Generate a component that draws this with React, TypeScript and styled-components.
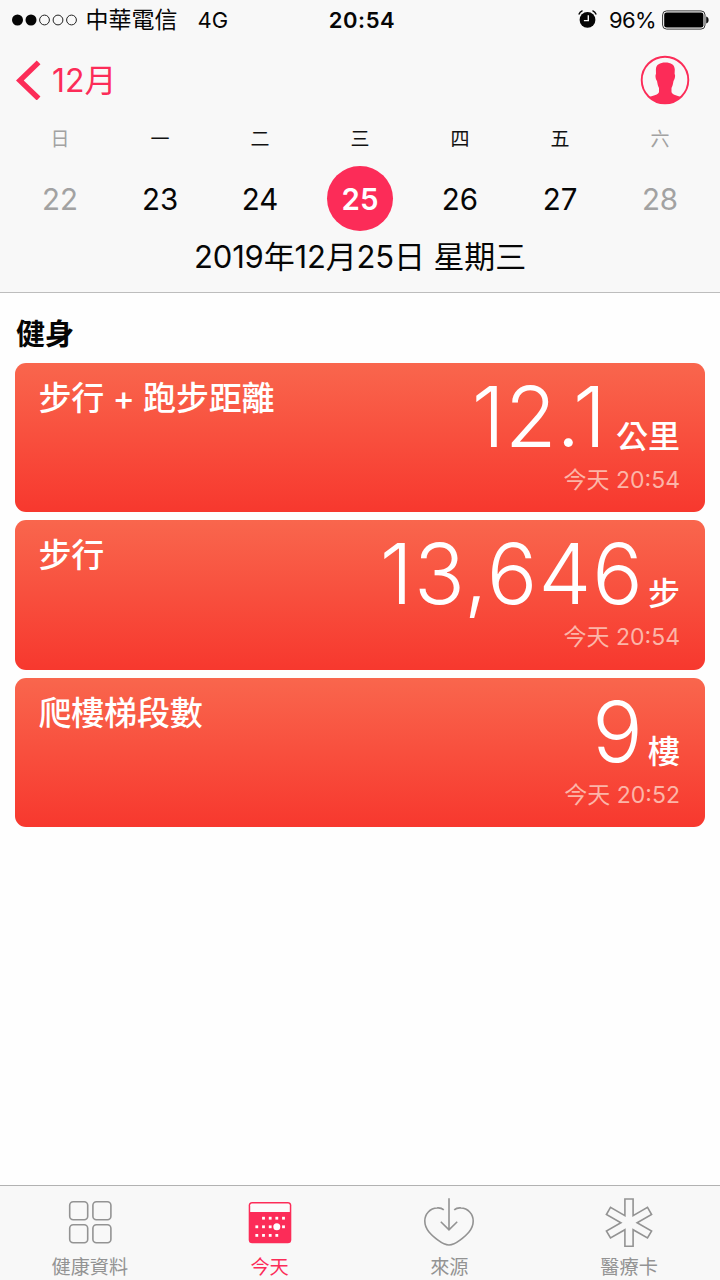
import React from "react";
import styled, { createGlobalStyle } from "styled-components";

const PINK = "#fc2c58";
const GREY = "#939393";

const GlobalStyle = createGlobalStyle`
  * { box-sizing: border-box; }
  body {
    margin: 0;
    background: #fefefe;
    color: #060606;
    font-family: Inter, "Noto Sans CJK TC", "Liberation Sans", sans-serif;
  }
`;

const Screen = styled.div`
  width: 720px;
  height: 1280px;
  display: flex;
  flex-direction: column;
  overflow: hidden;
  white-space: nowrap;
`;

const Header = styled.header`
  height: 293px;
  flex: none;
  background: #f8f8f8;
  border-bottom: 1px solid #bdbdbd;
`;

const StatusBar = styled.div`
  display: grid;
  grid-template-columns: 1fr auto 1fr;
  height: 40px;
  padding: 0 11px 0 12px;
  line-height: 40px;
  font-size: 22px;
`;

const StatusGroup = styled.div<{ $end?: boolean }>`
  display: flex;
  align-items: center;
  justify-content: ${(p) => (p.$end ? "flex-end" : "flex-start")};
`;

const Carrier = styled.span`
  margin: 0 20px 0 7.5px;
  font-size: 23px;
`;

const Network = styled.span`
  font-size: 22px;
`;

const Clock = styled.span`
  margin-left: 3px;
  font-weight: 600;
  letter-spacing: 0.6px;
`;

const BatteryLevel = styled.span`
  margin: 0 6px 0 12px;
  letter-spacing: -0.6px;
`;

const NavBar = styled.nav`
  display: flex;
  align-items: center;
  justify-content: space-between;
  height: 80px;
  padding: 0 30px 0 16px;
`;

const BackLink = styled.a`
  display: flex;
  align-items: center;
  gap: 11px;
  color: ${PINK};
  font-size: 32px;
  line-height: 42px;
`;

const BackLabel = styled.span`
  padding-top: 2px;
`;

const WeekRow = styled.div<{ $height: number }>`
  display: grid;
  grid-template-columns: repeat(7, 100px);
  justify-content: center;
  align-items: center;
  justify-items: center;
  height: ${(p) => p.$height}px;
`;

const Weekday = styled.span<{ $muted: boolean }>`
  color: ${(p) => (p.$muted ? "#a2a2a2" : "#111")};
  font-size: 19px;
  line-height: 39px;
`;

const Day = styled.span<{ $muted: boolean; $selected: boolean }>`
  width: 66px;
  height: 65px;
  border-radius: 50%;
  text-align: center;
  font-size: 29.5px;
  line-height: 66px;
  font-weight: ${(p) => (p.$selected ? 600 : 400)};
  color: ${(p) => (p.$selected ? "#fff" : p.$muted ? "#a2a2a2" : "#060606")};
  background: ${(p) => (p.$selected ? PINK : "transparent")};
`;

const FullDate = styled.div`
  text-align: center;
  font-size: 31px;
  letter-spacing: -0.15px;
  line-height: 34px;
`;

const Content = styled.main`
  flex: 1;
  padding: 17px 15.5px 0 15px;
`;

const SectionTitle = styled.h2`
  margin: 0 0 4px 1px;
  font-size: 29px;
  font-weight: 700;
  line-height: 49px;
`;

const CardList = styled.div`
  display: grid;
  gap: 8px;
`;

const Card = styled.section`
  display: flex;
  justify-content: space-between;
  height: 149.4px;
  padding: 5px 24.5px 0 23.5px;
  border-radius: 11px;
  color: #fff;
  background: linear-gradient(#f9664d, #f7382e);
`;

const CardTitle = styled.h3`
  margin: 0;
  font-size: 33px;
  font-weight: 500;
  letter-spacing: -0.2px;
  line-height: 61px;
`;

const Reading = styled.div`
  display: flex;
  flex-direction: column;
  align-items: flex-end;
`;

const Amount = styled.div`
  display: flex;
  align-items: flex-end;
  height: 97px;
`;

const Value = styled.span<{ $decimal: boolean }>`
  margin-right: ${(p) => (p.$decimal ? 10 : 4)}px;
  font-size: 84px;
  font-weight: 300;
  letter-spacing: ${(p) => (p.$decimal ? 0 : 1.1)}px;
  line-height: 97px;
`;

const Unit = styled.span`
  margin-bottom: 8px;
  font-size: 32px;
  font-weight: 500;
  line-height: 40px;
`;

const Stamp = styled.span`
  color: #fcb5a8;
  font-size: 23px;
  line-height: 30px;
`;

const TabBar = styled.nav`
  display: grid;
  grid-template-columns: repeat(4, 1fr);
  height: 95px;
  flex: none;
  padding-right: 1px;
  background: #f8f8f8;
  border-top: 1px solid #b2b2b2;
`;

const Tab = styled.a<{ $active: boolean }>`
  display: flex;
  flex-direction: column;
  align-items: center;
  padding-top: 11px;
  color: ${(p) => (p.$active ? PINK : GREY)};
  font-size: 19.2px;
  line-height: 34px;

  svg {
    margin-bottom: 3px;
  }
`;

const SignalDots = () => (
  <svg width="66" height="14" viewBox="0 0 66 14">
    {[0, 1, 2, 3, 4].map((i) => (
      <circle
        key={i}
        cx={5.5 + i * 13.5}
        cy="7"
        r={i < 2 ? 5.5 : 4.9}
        fill={i < 2 ? "#060606" : "none"}
        stroke={i < 2 ? "none" : "#222"}
        strokeWidth="1"
      />
    ))}
  </svg>
);

const AlarmIcon = () => (
  <svg width="20" height="20" viewBox="0 0 20 20" fill="none">
    <circle cx="10.5" cy="9.9" r="7.9" fill="#060606" />
    <path d="M1.8 4.600C2.500 2.600 3.700 1.500 5.500.7M19.200 4.600C18.500 2.600 17.300 1.500 15.500.7" stroke="#060606" strokeWidth="1.4" />
    <path d="M11.300 5.200v5.400H6.900" stroke="#f8f8f8" strokeWidth="1.4" />
  </svg>
);

const BatteryIcon = () => (
  <svg width="47" height="20" viewBox="0 0 47 20">
    <rect x="0.6" y="0.9" width="42.4" height="18.2" rx="4" fill="none" stroke="#333" strokeWidth="1" />
    <rect x="2.2" y="2.4" width="39.2" height="15.2" rx="2.4" fill="#000" />
    <path d="M44.2 6.6c3.2.6 3.2 6.2 0 6.8z" fill="#111" />
  </svg>
);

const BackIcon = () => (
  <svg width="25" height="40" viewBox="0 0 25 40" fill="none" stroke={PINK} strokeWidth="5.4">
    <path d="M22.6 2.4 3.8 20.5l18.8 18" />
  </svg>
);

const ProfileIcon = () => (
  <svg width="50" height="50" viewBox="0 0 50 50">
    <circle cx="25" cy="25" r="23.3" fill="none" stroke={PINK} strokeWidth="1.9" />
    <path
      d="M25.3 7.5C31 7.5 34.500 9.500 34.800 14.500L34.600 19C35.600 20 35 24 33.500 26C33 29 32.500 31 31.500 33V37C32.200 40 37 40.500 41 42A23.500 23.500 0 0 1 9 42C13.500 40.500 18.300 40 19 37V33C18 31 17.500 29 17 26C15.500 24 15 20 16 19L15.900 14.500C16 9.500 20 7.500 25.300 7.500z"
      fill={PINK}
    />
  </svg>
);

const TilesIcon = () => (
  <svg width="50" height="50" viewBox="0 0 50 50" fill="none" stroke={GREY} strokeWidth="1.6">
    <rect x="4.7" y="4.7" width="18" height="18" rx="3.5" />
    <rect x="27.9" y="4.7" width="18" height="18" rx="3.5" />
    <rect x="4.7" y="27.7" width="18" height="18" rx="3.5" />
    <rect x="27.9" y="27.7" width="18" height="18" rx="3.5" />
  </svg>
);

const CalendarIcon = () => (
  <svg width="50" height="50" viewBox="0 0 50 50">
    <rect x="3.7" y="5" width="42.6" height="41.3" rx="3.5" fill={PINK} />
    <path d="M5.2 15V8.2q0-1.7 1.7-1.7h36.2q1.7 0 1.7 1.7V15z" fill="#fbfbfb" />
    <g fill="#fff">
      {[18.5, 25.2, 31.8, 38.5].map((x) => (
        <rect key={x} x={x - 1.4} y="19.8" width="2.8" height="2.8" />
      ))}
      {[11.8, 18.5, 25.2, 38.5].map((x) => (
        <rect key={x} x={x - 1.4} y="28.4" width="2.8" height="2.8" />
      ))}
      {[11.8, 18.5, 25.2, 31.8].map((x) => (
        <rect key={x} x={x - 1.4} y="37" width="2.8" height="2.8" />
      ))}
      <circle cx="31.8" cy="29.8" r="3.5" />
    </g>
  </svg>
);

const HeartIcon = () => (
  <svg width="52" height="50" viewBox="0 0 52 50" fill="none" stroke={GREY} strokeWidth="1.6">
    <path d="M20.8 12.9C18.7 11 16.5 10.7 14.2 10.9 7 11.3 1.8 17 1.8 24c0 8.6 6.8 14.3 13.2 19.2 3.3 2.5 7 4.8 11 4.8s7.7-2.3 11-4.8C43.4 38.3 50.2 32.6 50.2 24c0-7-5.2-12.7-12.4-13.1-2.3-.2-4.5.1-6.6 2" />
    <path d="M26 1.3v31.4M17.8 24.8l8.2 8 8.2-8" />
  </svg>
);

const StarIcon = () => (
  <svg width="50" height="50" viewBox="0 0 50 50" fill="none" stroke={GREY} strokeWidth="1.6">
    <path d="M20.9 2h8.2v16.7l14.4-8.3 4.1 7.1-14.5 8.2 14.5 8.3-4.1 7-14.4-8.3V49.3h-8.2V32.7L6.5 41l-4.1-7 14.5-8.3-14.5-8.2 4.1-7.1 14.4 8.3z" />
  </svg>
);

const week = [
  { name: "日", day: 22 },
  { name: "一", day: 23 },
  { name: "二", day: 24 },
  { name: "三", day: 25 },
  { name: "四", day: 26 },
  { name: "五", day: 27 },
  { name: "六", day: 28 },
];

const isWeekend = (i: number) => i === 0 || i === 6;

const readings = [
  { title: "步行 + 跑步距離", value: "12.1", unit: "公里", stamp: "今天 20:54" },
  { title: "步行", value: "13,646", unit: "步", stamp: "今天 20:54" },
  { title: "爬樓梯段數", value: "9", unit: "樓", stamp: "今天 20:52" },
];

const tabs = [
  { label: "健康資料", Icon: TilesIcon },
  { label: "今天", Icon: CalendarIcon },
  { label: "來源", Icon: HeartIcon },
  { label: "醫療卡", Icon: StarIcon },
];

export default function App() {
  return (
    <Screen>
      <GlobalStyle />
      <Header>
        <StatusBar>
          <StatusGroup>
            <SignalDots />
            <Carrier>中華電信</Carrier>
            <Network>4G</Network>
          </StatusGroup>
          <Clock>20:54</Clock>
          <StatusGroup $end>
            <AlarmIcon />
            <BatteryLevel>96%</BatteryLevel>
            <BatteryIcon />
          </StatusGroup>
        </StatusBar>
        <NavBar>
          <BackLink>
            <BackIcon />
            <BackLabel>12月</BackLabel>
          </BackLink>
          <ProfileIcon />
        </NavBar>
        <WeekRow $height={37}>
          {week.map((d, i) => (
            <Weekday key={d.name} $muted={isWeekend(i)}>
              {d.name}
            </Weekday>
          ))}
        </WeekRow>
        <WeekRow $height={83}>
          {week.map((d, i) => (
            <Day key={d.day} $muted={isWeekend(i)} $selected={d.day === 25}>
              {d.day}
            </Day>
          ))}
        </WeekRow>
        <FullDate>2019年12月25日 星期三</FullDate>
      </Header>
      <Content>
        <SectionTitle>健身</SectionTitle>
        <CardList>
          {readings.map((r) => (
            <Card key={r.title}>
              <CardTitle>{r.title}</CardTitle>
              <Reading>
                <Amount>
                  <Value $decimal={r.value.includes(".")}>{r.value}</Value>
                  <Unit>{r.unit}</Unit>
                </Amount>
                <Stamp>{r.stamp}</Stamp>
              </Reading>
            </Card>
          ))}
        </CardList>
      </Content>
      <TabBar>
        {tabs.map(({ label, Icon }) => (
          <Tab key={label} $active={label === "今天"}>
            <Icon />
            {label}
          </Tab>
        ))}
      </TabBar>
    </Screen>
  );
}
